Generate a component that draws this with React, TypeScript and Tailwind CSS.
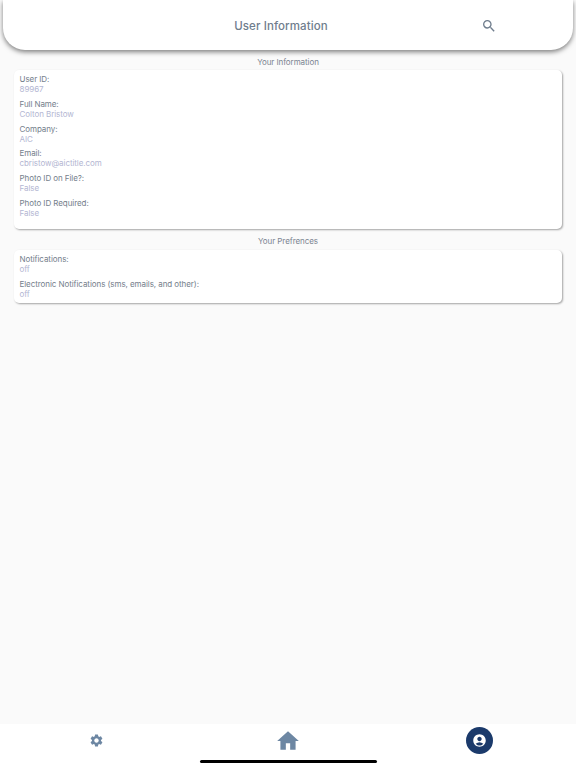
import { MdSearch, MdSettings, MdHome, MdAccountCircle } from "react-icons/md";

const info = [
  ["User ID:", "89967"],
  ["Full Name:", "Colton Bristow"],
  ["Company:", "AIC"],
  ["Email:", "cbristow@aictitle.com"],
  ["Photo ID on File?:", "False"],
  ["Photo ID Required:", "False"],
];
const prefs = [
  ["Notifications:", "off"],
  ["Electronic Notifications (sms, emails, and other):", "off"],
];

function Rows({ rows }: { rows: string[][] }) {
  return (
    <div className="flex flex-col gap-[4.8px]">
      {rows.map(([label, value]) => (
        <div key={label} className="text-[8px] leading-[10px] tracking-[-0.07px]">
          <div className="text-[#747e8b]">{label}</div>
          <div className="text-[#b3b6d2]">{value}</div>
        </div>
      ))}
    </div>
  );
}

export default function App() {
  return (
    <div className="w-[576px] h-[768px] flex flex-col bg-[#fafafa] overflow-hidden font-['Inter',sans-serif]">
      <header className="relative mx-[3px] h-[50px] shrink-0 bg-white rounded-b-[22px] shadow-[0_2px_5px_rgba(0,0,0,0.5)] flex items-center pt-[3px]">
        <div className="w-[556px] text-center text-[11.5px] font-medium tracking-[0.1px] text-[#6f7d8d]">User Information</div>
        <MdSearch className="absolute left-[477.5px] top-[18px] text-[16px] text-[#6f7d8d]" />
      </header>
      <main className="flex-1 px-[14px]">
        <div className="h-[20px] pt-[7px] text-center text-[8px] leading-[10px] tracking-[-0.07px] text-[#7b8491]">Your Information</div>
        <section className="h-[159px] bg-white rounded-[5px] shadow-[1px_1px_2px_rgba(0,0,0,0.35)] px-[5.5px] pt-[4px]">
          <Rows rows={info} />
        </section>
        <div className="h-[21px] pt-[7px] text-center text-[8px] leading-[10px] tracking-[-0.07px] text-[#7b8491]">Your Prefrences</div>
        <section className="h-[53px] bg-white rounded-[5px] shadow-[1px_1px_2px_rgba(0,0,0,0.35)] px-[5.5px] pt-[4px]">
          <Rows rows={prefs} />
        </section>
      </main>
      <footer className="relative h-[44px] shrink-0 bg-white">
        <div className="grid grid-cols-3 h-[33px] items-center justify-items-center">
          <MdSettings className="text-[15px] text-[#6d87a3]" />
          <MdHome className="text-[26px] text-[#6d87a3]" />
          <div className="relative left-[-0.5px] w-[27px] h-[27px] rounded-full bg-[#1b3a6b] flex items-center justify-center">
            <MdAccountCircle className="text-[15px] text-white" />
          </div>
        </div>
        <div className="absolute left-[200px] top-[36px] w-[177px] h-[3px] rounded-full bg-black" />
      </footer>
    </div>
  );
}
